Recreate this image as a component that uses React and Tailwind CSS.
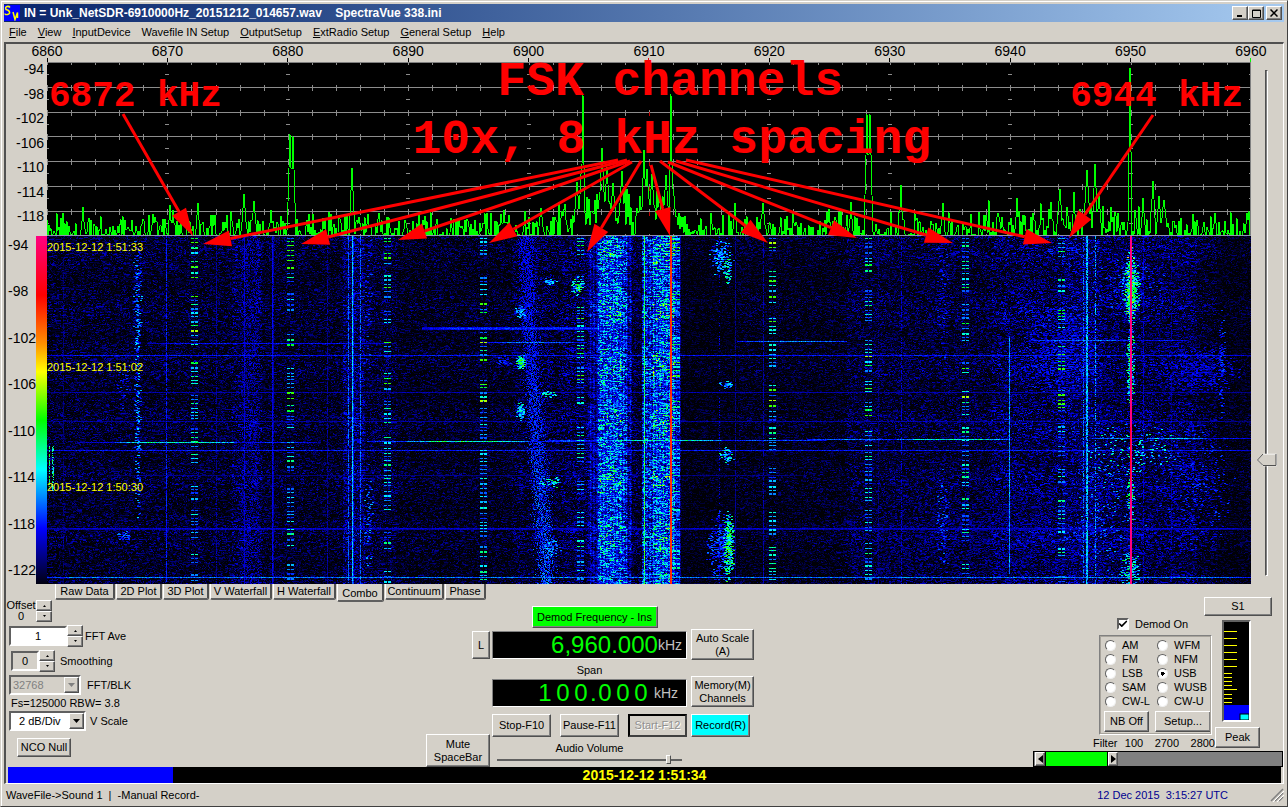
import { useState } from 'react'
import clsx from 'clsx'
import { Check } from 'lucide-react'

const PLOT_W = 1204
const SPEC_H = 174
const FALL_H = 348
const FREQS = [6860, 6870, 6880, 6890, 6900, 6910, 6920, 6930, 6940, 6950, 6960]
const SPEC_DB = [-94, -98, -102, -106, -110, -114, -118]
const FALL_DB = [-94, -98, -102, -106, -110, -114, -118, -122]

function makeRandom(seed) {
  let a = seed
  return () => {
    a = (a + 0x6d2b79f5) | 0
    let t = Math.imul(a ^ (a >>> 15), 1 | a)
    t = (t + Math.imul(t ^ (t >>> 7), 61 | t)) ^ t
    return ((t ^ (t >>> 14)) >>> 0) / 4294967296
  }
}

// ---- spectrum trace ----

// x in plot pixels, height above the baseline, half width
const PEAKS = [
  [36, 29, 1], [123, 31, 1], [126, 26, 1], [151, 33, 1], [197, 42, 2], [207, 35, 2], [224, 26, 1],
  [243, 102, 2], [246, 100, 2], [305, 68, 2], [321, 22, 1], [457, 26, 1], [494, 28, 2], [518, 32, 1],
  [530, 54, 3], [536, 142, 1], [534, 62, 2], [555, 88, 3], [560, 69, 3], [566, 53, 3], [575, 65, 3],
  [597, 86, 2], [600, 67, 3], [605, 62, 3], [612, 38, 3], [619, 61, 3], [624, 142, 1], [627, 40, 2],
  [688, 33, 1], [716, 33, 2], [782, 27, 1], [804, 34, 1], [820, 122, 2], [823, 122, 2], [854, 51, 1],
  [896, 33, 1], [970, 38, 1], [1004, 34, 1], [1013, 47, 2], [1027, 44, 1], [1040, 66, 3], [1048, 72, 2],
  [1052, 40, 2], [1083, 168, 1], [1096, 38, 1], [1106, 55, 2], [1112, 40, 2], [1117, 36, 3], [1200, 23, 1],
]

function floorAt(x) {
  if (x > 535 && x < 585) return [18, 30]
  if (x > 588 && x < 630) return [20, 30]
  if (x > 505 && x < 536) return [6, 32]
  if (x > 930 && x < 1125) return [4, 32]
  return [0, 25]
}

function buildTrace() {
  const rnd = makeRandom(71)
  let d = ''
  for (let x = 0; x < PLOT_W; x++) {
    const [base, amp] = floorAt(x)
    let h = base + amp * Math.pow(rnd(), 1.7)
    if (x % 2) h -= 8
    for (const [px, ph, pw] of PEAKS) {
      const dist = Math.abs(px - x)
      if (dist <= pw) h = Math.max(h, ph * (1 - dist / (pw + 1)))
    }
    d += `${x ? 'L' : 'M'}${x} ${(SPEC_H - Math.max(0, h)).toFixed(1)}`
  }
  return d
}

function buildGrid() {
  let d = ''
  for (let i = 0; i < 8; i++) {
    const y = Math.round(i * 24.8) + 0.5
    if (i > 0) d += `M0 ${y}H${PLOT_W}`
    for (let k = 0; k <= 50; k++) {
      const x = Math.round(k * 24.08) + 0.5
      d += i === 0 ? `M${x} 0v3` : `M${x} ${y - 3}v6`
    }
    for (let k = 0; k <= 10; k++) {
      if (k !== 5) d += `M${Math.round(k * 120.4) - 2} ${y + 12}h4`
    }
  }
  return d
}

const TRACE = buildTrace()
const GRID = buildGrid()

// ---- waterfall ----

const STOPS = [
  [0, 0, 0, 6], [0.12, 0, 0, 50], [0.25, 0, 0, 160], [0.36, 0, 0, 255], [0.48, 0, 110, 255], [0.6, 0, 255, 255],
  [0.73, 0, 255, 0], [0.82, 255, 255, 0], [0.88, 255, 140, 0], [0.94, 255, 0, 0], [1, 255, 0, 128],
]
const LEVELS = 25
const BAND = 58

function colorOf(v) {
  let i = 1
  while (i < STOPS.length - 1 && v > STOPS[i][0]) i++
  const a = STOPS[i - 1]
  const b = STOPS[i]
  const t = (v - a[0]) / (b[0] - a[0])
  const mix = k => Math.round(a[k] + (b[k] - a[k]) * t)
  return `rgb(${mix(1)},${mix(2)},${mix(3)})`
}

// from x, base level, random spread
const ZONES = [
  [0, 0.02, 0.25], [185, 0.04, 0.31], [215, 0.02, 0.24], [296, 0.06, 0.33], [318, 0.03, 0.26], [350, 0.01, 0.23],
  [465, 0.02, 0.28], [515, 0.04, 0.31], [541, 0.13, 0.3], [551, 0.23, 0.48], [575, 0.19, 0.44], [580, 0.12, 0.32],
  [585, 0.03, 0.26], [595, 0.17, 0.44], [606, 0.24, 0.5], [628, 0.17, 0.36], [633, 0.01, 0.17], [690, 0.01, 0.21],
  [800, 0.03, 0.26], [945, 0.04, 0.33], [1015, 0.06, 0.35], [1055, 0.04, 0.31], [1150, 0.02, 0.25], [1170, 0.01, 0.18],
]

// x, level, share of rows that are lit
const CARRIERS = [
  [16, 0.22, 0.7], [119, 0.4, 0.85], [169, 0.26, 0.7], [197, 0.32, 0.9], [225, 0.36, 0.95], [226, 0.28, 0.8],
  [280, 0.26, 0.8], [301, 0.48, 0.8], [305, 0.57, 1], [306, 0.4, 0.8], [313, 0.48, 0.8], [597, 0.72, 1],
  [633, 0.26, 0.7], [672, 0.36, 0.3], [688, 0.24, 0.8], [716, 0.28, 0.8], [831, 0.24, 0.6], [854, 0.33, 0.6],
  [1036, 0.5, 0.6], [1039, 0.55, 0.9], [1040, 0.58, 0.9], [1048, 0.54, 0.6], [1096, 0.32, 0.7], [1124, 0.26, 0.6],
]

const FSK = [144, 240, 337, 433, 530, 626, 722, 818, 915, 1011]

// y, from x, to x, level
const BURSTS = [
  [91, 375, 560, 0.4], [92, 375, 580, 0.46], [93, 375, 560, 0.4], [107, 100, 340, 0.4], [106, 440, 540, 0.52],
  [105, 690, 800, 0.56], [104, 985, 1085, 0.54], [104, 1090, 1140, 0.46], [119, 0, 1204, 0.42], [156, 0, 1204, 0.3],
  [185, 0, 1204, 0.28], [206, 30, 90, 0.38], [206, 68, 190, 0.7], [206, 190, 270, 0.44], [205, 320, 360, 0.54],
  [205, 360, 482, 0.72], [205, 482, 550, 0.48], [204, 500, 550, 0.54], [204, 550, 675, 0.7], [204, 675, 780, 0.48],
  [203, 760, 850, 0.54], [203, 850, 962, 0.68], [202, 1045, 1095, 0.58], [202, 1100, 1160, 0.66], [202, 1160, 1204, 0.46],
  [214, 0, 1204, 0.42], [239, 60, 760, 0.24], [292, 0, 1204, 0.34], [293, 0, 1204, 0.28], [341, 0, 1204, 0.54],
]

// x, y, radius x, radius y, level, density
const BLOBS = [
  [473, 76, 6, 9, 0.55, 0.6], [473, 125, 6, 9, 0.7, 0.9], [473, 175, 5, 11, 0.6, 0.9], [457, 125, 10, 6, 0.38, 0.5],
  [673, 20, 14, 22, 0.55, 0.35], [680, 32, 5, 16, 0.66, 0.5], [679, 148, 8, 5, 0.6, 0.7], [679, 219, 8, 10, 0.6, 0.6],
  [681, 310, 6, 42, 0.7, 0.7], [672, 310, 16, 40, 0.46, 0.35], [501, 45, 10, 4, 0.56, 0.5], [501, 158, 9, 4, 0.64, 0.5],
  [504, 246, 14, 6, 0.64, 0.4], [504, 312, 12, 12, 0.54, 0.25], [90, 60, 5, 80, 0.52, 0.25], [90, 180, 4, 140, 0.52, 0.25],
  [76, 150, 8, 24, 0.4, 0.15], [76, 300, 8, 6, 0.48, 0.35], [321, 60, 4, 80, 0.42, 0.14], [321, 285, 5, 60, 0.5, 0.2],
  [1083, 53, 10, 36, 0.7, 0.6], [1083, 50, 5, 44, 0.74, 0.7], [1083, 130, 5, 44, 0.68, 0.6], [1083, 262, 5, 24, 0.68, 0.5],
  [1083, 335, 12, 24, 0.66, 0.4], [1083, 50, 40, 34, 0.42, 0.14], [1015, 115, 44, 54, 0.38, 0.3], [1060, 285, 40, 70, 0.5, 0.07],
  [1085, 215, 50, 30, 0.62, 0.08], [1150, 135, 46, 26, 0.36, 0.28], [1145, 250, 44, 70, 0.4, 0.12], [950, 300, 200, 70, 0.26, 0.14],
  [895, 50, 8, 90, 0.4, 0.14], [895, 290, 8, 60, 0.46, 0.18], [1174, 130, 4, 60, 0.42, 0.3], [530, 50, 8, 10, 0.7, 0.4],
]

function buildWaterfall() {
  const rnd = makeRandom(1215)
  const width = PLOT_W
  const grid = new Float32Array(width * FALL_H)
  const put = (x, y, v) => {
    if (x < 0 || y < 0 || x >= width || y >= FALL_H) return
    const i = y * width + x
    if (v > grid[i]) grid[i] = v
  }

  for (let y = 0; y < FALL_H; y++) {
    let z = 0
    let r = 0
    const row = 1 + 0.12 * Math.sin(y * 0.11) + 0.1 * (rnd() - 0.5)
    for (let x = 0; x < width; x++) {
      while (z < ZONES.length - 1 && x >= ZONES[z + 1][0]) z++
      const [, base, spread] = ZONES[z]
      const busy = base > 0.1
      if (rnd() > (busy ? 0.45 : 0.3)) r = rnd()
      let v = base + spread * Math.pow(r, busy ? 1.3 : 2.1) * row
      if (busy) {
        // slanted dark streaks
        const slant = Math.sin(y * 0.55 - x * 0.42 + 2 * Math.sin(y * 0.07))
        v += 0.06 * Math.sin(x * 1.9)
        if (slant < -0.35) v -= 0.14 * rnd()
      }
      grid[y * width + x] = Math.max(0, v)
    }
  }

  // drifting carrier on the left of the busy block
  for (let y = 0; y < FALL_H; y++) {
    const cx = 478 + 22 * Math.pow(y / FALL_H, 1.2)
    for (let k = 0; k < 10; k++) {
      const dx = Math.round((rnd() + rnd() + rnd() - 1.5) * 9)
      put(Math.round(cx) + dx, y, 0.3 + rnd() * (0.08 + 0.16 * (y / FALL_H)))
    }
    put(Math.round(492 + rnd() * 16), y, 0.3)
    for (let k = 0; k < 4; k++) put(Math.round(194 + rnd() * 18), y, 0.2 + rnd() * 0.14)
  }

  for (const [cx, cy, rx, ry, level, density] of BLOBS) {
    for (let y = cy - ry; y <= cy + ry; y++) {
      for (let x = cx - rx; x <= cx + rx; x++) {
        const q = Math.sqrt(((x - cx) / rx) ** 2 + ((y - cy) / ry) ** 2)
        if (q < 1 && rnd() < density * (1 - q) * 1.2) {
          const v = level * (0.6 + rnd() * 0.5)
          put(x, y, v)
          put(x + 1, y, v)
        }
      }
    }
  }
  // short dashes at the left edge
  for (let y = 210; y < 255; y++) {
    for (const x of [2, 5, 6]) if (rnd() < 0.6) put(x, y, 0.5 + rnd() * 0.26)
  }

  for (const [x, level, share] of CARRIERS) {
    for (let y = 0; y < FALL_H; y++) {
      if (rnd() < share) put(x, y, level * (0.8 + rnd() * 0.3))
    }
  }
  for (let y = 100; y < 338; y++) put(962, y, 0.42 + rnd() * 0.16)

  // keyed channels: short dashes in two side by side tones
  for (const x0 of FSK) {
    let y = 2
    while (y < FALL_H - 4) {
      const group = 3 + Math.floor(rnd() * 7)
      for (let g = 0; g < group && y < FALL_H; g++) {
        const level = 0.42 + rnd() * (y < 180 ? 0.36 : 0.26)
        const tall = rnd() < 0.25 ? 2 : 1
        for (let t = 0; t < tall; t++) {
          for (let k = 0; k < 7; k++) if (k !== 3 || rnd() < 0.3) put(x0 + k, y + t, level - (k === 3 ? 0.1 : 0))
        }
        y += tall + 2 + Math.floor(rnd() * 3)
      }
      y += Math.floor(rnd() * 20)
    }
  }

  for (const [y, from, to, level] of BURSTS) {
    for (let x = from; x < to; x++) {
      const edge = Math.min(1, 0.75 + Math.min(x - from, to - x) / 120)
      put(x, y, level * edge * (0.72 + rnd() * 0.32))
    }
  }

  for (let y = 0; y < FALL_H; y++) {
    const dim = y > 190 && y < 245
    grid[y * width + 1083] = dim ? 0.95 : 0.98
    grid[y * width + 1084] = 0.99
    grid[y * width + 623] = 0.92 + rnd() * 0.03
    grid[y * width + 624] = 0.92
  }

  const out = new Map()
  const quant = i => Math.min(LEVELS - 1, Math.round(grid[i] * (LEVELS - 1)))
  for (let y = 0; y < FALL_H; y++) {
    const band = Math.floor(y / BAND)
    let x = 0
    while (x < width) {
      const q = quant(y * width + x)
      let n = 1
      while (x + n < width && quant(y * width + x + n) === q) n++
      if (q > 1) {
        const key = band * 100 + q
        if (!out.has(key)) out.set(key, [])
        out.get(key).push(`M${x} ${y + 0.5}h${n}`)
      }
      x += n
    }
  }
  return [...out].map(([key, parts]) => ({ key, color: colorOf((key % 100) / (LEVELS - 1)), d: parts.join('') }))
}

const WATERFALL = buildWaterfall()

// ---- notes drawn over the plot ----

// start x, y and tip x, y from the top left of the plot
const ARROWS = [
  [76, 52, 146, 174], [571, 98, 156, 182], [580, 98, 254, 182], [583, 99, 351, 178], [585, 100, 442, 181],
  [594, 99, 540, 190], [604, 103, 623, 174], [613, 99, 721, 181], [621, 100, 810, 176], [629, 99, 906, 181],
  [639, 98, 1005, 181], [1106, 53, 1022, 176],
]

function Arrow({ points }) {
  const [x1, y1, x2, y2] = points
  const len = Math.hypot(x2 - x1, y2 - y1)
  const ux = (x2 - x1) / len
  const uy = (y2 - y1) / len
  const bx = x2 - ux * 28
  const by = y2 - uy * 28
  return (
    <g>
      <line x1={x1} y1={y1} x2={bx} y2={by} stroke="#f00" strokeWidth="3" />
      <polygon points={`${x2},${y2} ${bx - uy * 8},${by + ux * 8} ${bx + uy * 8},${by - ux * 8}`} fill="#f00" />
    </g>
  )
}

const RAISED = 'border border-t-white border-l-white border-r-[#505050] border-b-[#505050] shadow-[inset_-1px_-1px_0_#808080]'
const SUNKEN = 'border-2 border-t-[#606060] border-l-[#606060] border-r-white border-b-white'

function Button({ className, face = 'bg-[#d4d0c8]', children, ...props }) {
  return (
    <button className={clsx('flex items-center justify-center text-center leading-[13px]', RAISED, face, className)} {...props}>
      {children}
    </button>
  )
}

function Spinner({ label, onStep }) {
  return (
    <div className="flex w-4 flex-none flex-col">
      <Button aria-label={`${label} up`} onClick={() => onStep(1)} className="h-[11px]">
        <svg width="5" height="3"><path d="M1 3L2.5 1L4 3z" /></svg>
      </Button>
      <Button aria-label={`${label} down`} onClick={() => onStep(-1)} className="h-[11px]">
        <svg width="5" height="3"><path d="M1 0L2.5 2L4 0z" /></svg>
      </Button>
    </div>
  )
}

function TitleBar() {
  return (
    <header className="flex h-[18px] items-center bg-linear-to-r from-[#0a246a] to-[#a6caf0] pr-[2px] text-white">
      <svg width="16" height="16" className="mr-1 flex-none">
        <rect width="16" height="16" fill="#00f" />
        <path d="M6 2.5Q5 1 3 1.5T2 4.500Q5 5 5.500 7T3.500 9.500T1 8.500M9 7L11 14.500L13.500 7.500V13" fill="none" stroke="#ff0" strokeWidth="1.500" />
      </svg>
      <h1 className="flex-1 text-[12px] leading-4 font-bold whitespace-pre">IN = Unk_NetSDR-6910000Hz_20151212_014657.wav    SpectraVue 338.ini</h1>
      <Button aria-label="Minimize" className="h-[14px] w-4"><svg width="8" height="8"><path d="M1 7H6" stroke="#000" strokeWidth="2" /></svg></Button>
      <Button aria-label="Maximize" className="h-[14px] w-4"><svg width="9" height="9"><path d="M.5 1H8.500V8.500H.5zM0 1.500H9" fill="none" stroke="#000" /></svg></Button>
      <Button aria-label="Close" className="ml-[2px] h-[14px] w-4"><svg width="8" height="8"><path d="M.5 .5L7.500 7.500M7.500 .5L.5 7.500" stroke="#000" strokeWidth="1.500" /></svg></Button>
    </header>
  )
}

const MENU = ['File', 'View', 'InputDevice', 'Wavefile IN Setup', 'OutputSetup', 'ExtRadio Setup', 'General Setup', 'Help']

function MenuBar() {
  return (
    <nav className="flex h-5 items-center gap-[11px] px-[5px]">
      {MENU.map(item => (
        <button key={item}>
          {item.startsWith('Wavefile') ? item : <><span className="underline">{item[0]}</span>{item.slice(1)}</>}
        </button>
      ))}
    </nav>
  )
}

function FrequencyAxis() {
  return (
    <div className="mr-8 ml-[41px] flex h-[18px] justify-between text-[14px] leading-[14px]">
      {FREQS.map(f => (
        <div key={f} className="flex w-0 flex-col items-center">
          <span>{f}</span>
          <span className={clsx('h-1 w-px flex-none', f === 6910 ? 'bg-red-600' : f === 6960 ? 'bg-[#00ff00]' : 'bg-black')} />
        </div>
      ))}
    </div>
  )
}

function Spectrum() {
  return (
    <svg className="block w-full" height={SPEC_H} viewBox={`0 0 ${PLOT_W} ${SPEC_H}`} preserveAspectRatio="none" shapeRendering="crispEdges">
      <rect width={PLOT_W} height={SPEC_H} />
      <path d={GRID} stroke="#8c8c8c" fill="none" />
      <path d={`M0 .5H${PLOT_W}M${PLOT_W - 0.5} 0V${SPEC_H}`} stroke="#808080" />
      <path d="M602.5 0V174" stroke="#c00000" strokeDasharray="4 21" />
      <path d={TRACE} fill="none" stroke="#00ff00" />
      <path d={`M0 ${SPEC_H - 0.5}H${PLOT_W}`} stroke="#9090b0" />
    </svg>
  )
}

function Waterfall() {
  return (
    <div className="relative">
      <svg className="block w-full" height={FALL_H} viewBox={`0 0 ${PLOT_W} ${FALL_H}`} preserveAspectRatio="none" shapeRendering="crispEdges">
        <rect width={PLOT_W} height={FALL_H} fill="#000006" />
        {WATERFALL.map(p => <path key={p.key} d={p.d} stroke={p.color} />)}
      </svg>
      <div className="absolute top-1 left-0 flex flex-col gap-[106px] text-[11px] leading-[14px] text-[#ffff00]">
        <time>2015-12-12 1:51:33</time>
        <time>2015-12-12 1:51:02</time>
        <time>2015-12-12 1:50:30</time>
      </div>
    </div>
  )
}

function Notes() {
  return (
    <div className="pointer-events-none absolute inset-0 font-['Liberation_Mono',monospace] font-bold whitespace-nowrap text-[#ff0000]">
      <svg className="absolute inset-0 h-[200px] w-full" viewBox="0 0 1204 200" preserveAspectRatio="none">
        {ARROWS.map((a, i) => <Arrow key={i} points={a} />)}
      </svg>
      <p className="absolute top-[17px] left-[2px] text-[36px] leading-[36px]">6872 kHz</p>
      <p className="absolute top-[17px] right-[8px] text-[36px] leading-[36px]">6944 kHz</p>
      <p className="absolute top-0 right-[408px] text-[48px] leading-[40px]">FSK channels</p>
      <p className="absolute top-[58px] right-[320px] text-[48px] leading-[40px]">10x, 8 kHz spacing</p>
    </div>
  )
}

function GainSlider() {
  const [gain, setGain] = useState(23)
  return (
    <div className="relative mt-2 mb-2 w-8 flex-none">
      <div className="absolute inset-y-0 left-[14px] w-[3px] border border-[#505050] border-r-white border-b-white bg-[#808080]" />
      <svg width="20" height="13" className="absolute left-[6px] -translate-y-1/2" style={{ top: `${100 - gain}%` }}>
        <path d="M.5 6.500L6 .5H19.500V12.500H6z" fill="#d4d0c8" stroke="#fff" />
        <path d="M6 .5L.5 6.500L6 12H19V.5" fill="none" stroke="#505050" />
      </svg>
      <input type="range" aria-label="Display level" min="0" max="100" value={gain} onChange={e => setGain(Number(e.target.value))}
        className="absolute inset-0 h-full w-full opacity-0 [direction:rtl] [writing-mode:vertical-lr]" />
    </div>
  )
}

function PlotArea() {
  return (
    <div className="flex">
      <div className="flex w-[41px] flex-none flex-col text-[14px] leading-[14px]">
        <div className="flex h-[174px] flex-col justify-between pr-[3px] pb-[13px] text-right">
          {SPEC_DB.map(v => <span key={v}>{v}</span>)}
        </div>
        <div className="flex flex-1">
          <div className="flex w-[30px] flex-col justify-between pt-[2px] pb-[7px] pl-[2px]">
            {FALL_DB.map(v => <span key={v}>{v}</span>)}
          </div>
          <div className="flex-1 bg-[linear-gradient(to_bottom,#ff0080,#ff0000_17%,#ff9000_31%,#ffff00_39%,#00ff00_53%,#00ffff_67%,#0000ff_84%,#000010)]" />
        </div>
      </div>
      <div className="relative min-w-0 flex-1">
        <Spectrum />
        <Waterfall />
        <Notes />
      </div>
      <GainSlider />
    </div>
  )
}

const TABS = [
  ['Raw Data', 'w-[60px]'], ['2D Plot', 'w-[46px]'], ['3D Plot', 'w-[46px]'], ['V Waterfall', 'w-[62px]'],
  ['H Waterfall', 'w-[63px]'], ['Combo', 'w-[47px]'], ['Continuum', 'w-[59px]'], ['Phase', 'w-[41px]'],
]

function Tabs() {
  const [active, setActive] = useState('Combo')
  return (
    <div role="tablist" className="ml-[49px] flex h-3 items-start gap-px">
      {TABS.map(([name, width]) => (
        <button key={name} role="tab" aria-selected={active === name} onClick={() => setActive(name)}
          className={clsx('flex-none rounded-b-[2px] border-r-2 border-b-2 border-l border-r-[#505050] border-b-[#606060] border-l-white bg-[#d4d0c8] text-center', width, active === name ? 'h-[18px] pt-[3px] leading-[13px]' : 'h-4 leading-[15px]')}>
          {name}
        </button>
      ))}
    </div>
  )
}

function FftPanel() {
  const [offset, setOffset] = useState(0)
  const [ave, setAve] = useState(1)
  const [smooth, setSmooth] = useState(0)
  return (
    <div className="flex w-[420px] flex-none flex-col">
      <div className="mt-1 flex h-[22px] items-center">
        <div className="w-[30px] text-center leading-[11px]"><div>Offset</div><output>{offset}</output></div>
        <Spinner label="Offset" onStep={n => setOffset(offset + n)} />
      </div>
      <div className="mt-[3px] flex h-[22px] items-center pl-[3px]">
        <input id="ave" value={ave} onChange={e => setAve(e.target.value)} className={clsx('h-5 w-[58px] bg-white text-center', SUNKEN)} />
        <Spinner label="FFT Ave" onStep={n => setAve(Number(ave) + n)} />
        <label htmlFor="ave" className="ml-[2px]">FFT Ave</label>
      </div>
      <div className="mt-[3px] flex h-[22px] items-center pl-[5px]">
        <input id="smooth" value={smooth} onChange={e => setSmooth(e.target.value)} className={clsx('h-5 w-7 text-center', SUNKEN)} />
        <Spinner label="Smoothing" onStep={n => setSmooth(Number(smooth) + n)} />
        <label htmlFor="smooth" className="ml-[5px]">Smoothing</label>
      </div>
      <div className="mt-[3px] flex h-5 items-center pl-[3px]">
        <Dropdown id="blk" value="32768" disabled width="w-[72px]" />
        <label htmlFor="blk" className="ml-[6px]">FFT/BLK</label>
      </div>
      <p className="h-4 pl-[5px] leading-4">Fs=125000 RBW= 3.8</p>
      <div className="flex h-5 items-center pl-[3px]">
        <Dropdown id="vscale" value="2 dB/Div" width="w-[77px]" />
        <label htmlFor="vscale" className="ml-1">V Scale</label>
      </div>
      <Button className="mt-[7px] ml-[11px] h-[19px] w-[54px]">NCO Null</Button>
    </div>
  )
}

function Dropdown({ id, value, disabled, width }) {
  return (
    <div className={clsx('relative h-5', width, SUNKEN, disabled ? 'text-[#808080]' : 'bg-white')}>
      <select id={id} disabled={disabled} defaultValue={value} className={clsx('h-4 w-full appearance-none leading-4 opacity-100', disabled ? 'pl-[2px]' : 'pl-2')}>
        <option>{value}</option>
      </select>
      <span className={clsx('pointer-events-none absolute top-0 right-0 flex h-4 w-[15px] items-center justify-center bg-[#d4d0c8]', RAISED)}>
        <svg width="7" height="4"><path d="M0 0H7L3.500 4z" fill={disabled ? '#808080' : '#000'} /></svg>
      </span>
    </div>
  )
}

function Readout({ children, className }) {
  return (
    <div className={clsx('flex h-7 w-full items-center justify-end border border-t-[#808080] border-l-[#808080] border-r-white border-b-white bg-black text-[24px] leading-6 text-[#00ff00]', className)}>
      {children}
    </div>
  )
}

function TuningPanel() {
  const [volume, setVolume] = useState(94)
  return (
    <div className="flex flex-none">
      <div className="mr-[2px] flex w-16 flex-col items-end justify-between pt-[35px]">
        <Button className="h-7 w-[18px]">L</Button>
        <Button className="h-[33px] w-16">Mute<br />SpaceBar</Button>
      </div>
      <div className="flex w-[195px] flex-col items-center pt-[10px]">
        <Button face="bg-[#00ff00]" className="mr-[-10px] h-[22px] w-[126px]">Demod Frequency - Ins</Button>
        <Readout className="mt-[3px] pr-[4px]">
          6,960.000<span className="text-[14px] text-[#c0c0c0]">kHz</span>
        </Readout>
        <span className="h-5 leading-[22px]">Span</span>
        <Readout className="pr-2">
          {[...'100.000'].map((c, i) => <span key={i} className={clsx('text-center', c === '.' ? 'w-[6px]' : 'w-[18px]')}>{c}</span>)}
          <span className="ml-1 text-[14px] text-[#c0c0c0]">kHz</span>
        </Readout>
        <div className="mt-[7px] flex h-[23px] w-full justify-between">
          <Button className="w-[59px]">Stop-F10</Button>
          <Button className="w-[59px]">Pause-F11</Button>
          <button disabled className="w-[59px] border-2 border-t-black border-r-[#404040] border-b-[#404040] border-l-black leading-[13px] text-[#909090] [text-shadow:1px_1px_0_#fff]">Start-F12</button>
        </div>
        <label htmlFor="volume" className="h-[18px] leading-[22px]">Audio Volume</label>
        <input id="volume" type="range" min="0" max="100" value={volume} onChange={e => setVolume(Number(e.target.value))}
          className="h-[9px] w-[185px] appearance-none bg-[linear-gradient(#606060,#606060)] bg-[length:100%_2px] bg-center bg-no-repeat [&::-webkit-slider-thumb]:h-[9px] [&::-webkit-slider-thumb]:w-[5px] [&::-webkit-slider-thumb]:appearance-none [&::-webkit-slider-thumb]:border [&::-webkit-slider-thumb]:border-t-white [&::-webkit-slider-thumb]:border-l-white [&::-webkit-slider-thumb]:border-r-[#505050] [&::-webkit-slider-thumb]:border-b-[#505050] [&::-webkit-slider-thumb]:bg-[#d4d0c8]" />
      </div>
      <div className="ml-1 flex w-[63px] flex-col pt-[33px]">
        <Button className="h-[31px]">Auto Scale<br />(A)</Button>
        <Button className="mt-4 h-[31px]">Memory(M)<br />Channels</Button>
        <Button face="bg-[#00ffff]" className="mt-[7px] h-[23px] w-[59px]">Record(R)</Button>
      </div>
    </div>
  )
}

const MODES = ['AM', 'WFM', 'FM', 'NFM', 'LSB', 'USB', 'SAM', 'WUSB', 'CW-L', 'CW-U']

function Meter() {
  return (
    <div className={clsx('ml-[7px] w-[29px]', SUNKEN)}>
      <svg width="25" height="98" className="block">
        <rect width="25" height="98" />
        <path d="M0 9.500h13M0 16.500h13M0 23.500h13M0 30.500h13M0 37.500h13M0 44.500h13M0 51.500h8M0 55.500h8M0 59.500h8M0 63.500h8M0 67.500h13M0 72.500h8M0 76.500h8M0 80.500h8" stroke="#ff0" />
        <rect y="83" width="25" height="15" fill="#00f" />
        <rect x="16" y="92" width="9" height="6" fill="#0ff" stroke="#000" />
      </svg>
    </div>
  )
}

function DemodPanel() {
  const [on, setOn] = useState(true)
  const [mode, setMode] = useState('USB')
  return (
    <div className="ml-auto flex flex-none flex-col items-end">
      <div className="flex pr-[11px]">
        <div className="flex w-[122px] flex-col pt-[20px]">
          <label className="ml-6 flex h-[15px] items-center gap-[6px]">
            <span className="relative flex">
              <input type="checkbox" checked={on} onChange={e => setOn(e.target.checked)} className={clsx('size-3 appearance-none bg-white', SUNKEN)} />
              {on && <Check size={10} strokeWidth={4} className="pointer-events-none absolute top-px left-px" />}
            </span>
            Demod On
          </label>
          <fieldset className="mt-1 ml-[6px] w-[113px] border border-t-[#808080] border-l-[#808080] border-r-white border-b-white outline-1 -outline-offset-2 outline-[#a8a49c]">
            <div className="grid grid-cols-[52px_1fr] pt-[2px] pl-[5px]">
              {MODES.map(m => (
                <label key={m} className="flex h-[14px] items-center gap-[6px] leading-[14px]">
                  <input type="radio" name="mode" checked={mode === m} onChange={() => setMode(m)}
                    className="size-[11px] flex-none appearance-none rounded-full border border-t-[#606060] border-r-[#f0f0f0] border-b-[#f0f0f0] border-l-[#606060] bg-white checked:bg-[radial-gradient(#000_2px,#fff_2px)]" />
                  {m}
                </label>
              ))}
            </div>
            <div className="flex h-[26px] justify-between pt-[3px] pb-[2px] pl-1">
              <Button className="w-[45px]">NB Off</Button>
              <Button className="w-[56px]">Setup...</Button>
            </div>
          </fieldset>
          <div className="flex h-4 justify-between leading-[16px]">
            <span>Filter</span><span>100</span><span className="ml-1">2700</span><span className="ml-1">2800</span>
          </div>
        </div>
        <div className="flex w-[57px] flex-col items-start">
          <Button className="mt-px -ml-[11px] h-[19px] w-[68px]">S1</Button>
          <div className="mt-1"><Meter /></div>
          <Button className="mt-[5px] h-[21px] w-[45px]">Peak</Button>
        </div>
      </div>
      <div className="mt-auto flex h-4 w-[250px] border border-black bg-[#808080] pl-px">
        <Button aria-label="Lower filter edge" className="w-[10px]"><svg width="5" height="8"><path d="M5 0V8L0 4z" /></svg></Button>
        <div className="w-[63px] border-x border-black bg-[#00ff00]" />
        <Button aria-label="Upper filter edge" className="w-[10px]"><svg width="5" height="8"><path d="M0 0V8L5 4z" /></svg></Button>
      </div>
    </div>
  )
}

export default function App() {
  return (
    <div className="flex min-h-screen flex-col border border-[#d4d0c8] border-r-[#404040] border-b-[#404040] bg-[#d4d0c8] px-[3px] pt-[3px] font-['Liberation_Sans',Arial,sans-serif] text-[11px] leading-[14px] text-black shadow-[inset_1px_1px_0_#fff]">
      <TitleBar />
      <MenuBar />
      <main className="flex flex-col border-t-2 border-r border-b border-l-2 border-t-[#505050] border-r-white border-b-white border-l-[#505050]">
        <FrequencyAxis />
        <PlotArea />
        <Tabs />
        <section className="flex h-[171px]">
          <FftPanel />
          <TuningPanel />
          <DemodPanel />
        </section>
        <div className="relative mx-[2px] flex h-4 items-center justify-center bg-black">
          <div className="absolute inset-y-0 left-0 w-[13%] bg-[#0000ff]" />
          <time className="text-[14px] leading-4 font-bold text-[#ffff00]">2015-12-12 1:51:34</time>
        </div>
      </main>
      <footer className="flex flex-1 items-center pl-[2px]">
        <span className="flex-1">WaveFile-&gt;Sound 1&nbsp; |&nbsp; -Manual Record-</span>
        <span className="mr-[42px] whitespace-pre text-[#000090]">12 Dec 2015  3:15:27 UTC</span>
        <svg width="14" height="14"><path d="M1 13L13 1M5 13L13 5M9 13L13 9" stroke="#808080" strokeWidth="1.500" /><path d="M3 14L14 3M7 14L14 7" stroke="#fff" /></svg>
      </footer>
    </div>
  )
}
